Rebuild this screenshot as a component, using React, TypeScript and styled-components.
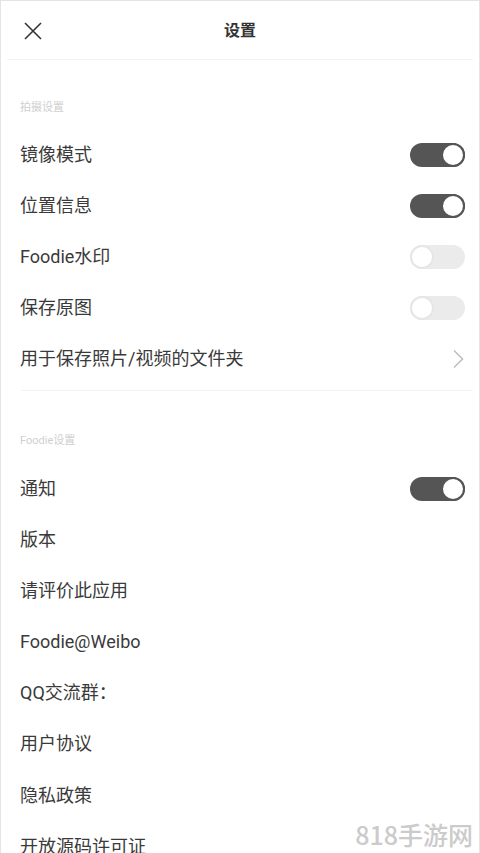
import React from "react";
import styled, { createGlobalStyle } from "styled-components";

const Global = createGlobalStyle`
  html, body { margin: 0; padding: 0; background: #fff; }
  body { font-family: Roboto, "Noto Sans CJK SC", sans-serif; color: #333; overflow: hidden; }
`;

const Frame = styled.div`
  position: relative;
  width: 480px;
  height: 853px;
  box-sizing: border-box;
  border: 1px solid #e4e4e4;
  border-bottom: none;
  overflow: hidden;
  background: #fff;
`;

const Header = styled.header`
  height: 58px;
  margin: 0 6px;
  border-bottom: 1px solid #f3f3f3;
  display: flex;
  align-items: center;
  justify-content: center;
  position: relative;
`;

const CloseButton = styled.button`
  position: absolute;
  left: 16px;
  top: 20px;
  width: 20px;
  height: 20px;
  padding: 0;
  border: none;
  background: none;
  display: flex;
`;

const Title = styled.h1`
  margin: 0;
  font-size: 16px;
  font-weight: 700;
  color: #333;
  line-height: 20px;
  padding-top: 1px;
`;

const SectionLabel = styled.div<{ $top: number; $bottom: number }>`
  padding: ${(p) => p.$top}px 19px ${(p) => p.$bottom}px;
  font-size: 11px;
  line-height: 14px;
  color: #cfcfcf;
`;

const Row = styled.div`
  height: 51.2px;
  padding: 0 14px 0 19px;
  display: flex;
  align-items: center;
  justify-content: space-between;
`;

const Label = styled.span`
  font-size: 18px;
  font-weight: 400;
  color: #3a3a3a;
  line-height: 24px;
`;

const Track = styled.div<{ $on: boolean }>`
  width: 55px;
  height: 24px;
  border-radius: 12px;
  box-sizing: border-box;
  background: ${(p) => (p.$on ? "#555" : "#ebebeb")};
  display: flex;
  justify-content: ${(p) => (p.$on ? "flex-end" : "flex-start")};
  align-items: center;
`;

const Knob = styled.div<{ $on: boolean }>`
  width: 24px;
  height: 24px;
  border-radius: 50%;
  box-sizing: border-box;
  background: #fff;
  border: 2px solid ${(p) => (p.$on ? "#555" : "#e6e6e6")};
`;

const Divider = styled.div`
  height: 1px;
  margin: 5px 7px 0 20px;
  background: #f3f3f3;
`;

const Watermark = styled.div`
  position: absolute;
  right: 6px;
  bottom: 2px;
  font-family: "Noto Sans CJK SC", sans-serif;
  font-size: 25px;
  font-weight: 500;
  color: #cbcbcb;
  line-height: 34px;
`;

const Toggle = ({ on }: { on: boolean }) => (
  <Track $on={on}>
    <Knob $on={on} />
  </Track>
);

const Chevron = () => (
  <svg width="14" height="20" viewBox="0 0 14 20">
    <path d="M3 1.5 L11.5 10 L3 18.5" fill="none" stroke="#bdbdbd" strokeWidth="1.5" />
  </svg>
);

type Item = { label: string; toggle?: boolean; chevron?: boolean };

const shoot: Item[] = [
  { label: "镜像模式", toggle: true },
  { label: "位置信息", toggle: true },
  { label: "Foodie水印", toggle: false },
  { label: "保存原图", toggle: false },
  { label: "用于保存照片/视频的文件夹", chevron: true },
];

const foodie: Item[] = [
  { label: "通知", toggle: true },
  { label: "版本" },
  { label: "请评价此应用" },
  { label: "Foodie@Weibo" },
  { label: "QQ交流群：" },
  { label: "用户协议" },
  { label: "隐私政策" },
  { label: "开放源码许可证" },
];

const renderRow = (it: Item) => (
  <Row key={it.label}>
    <Label>{it.label}</Label>
    {it.toggle !== undefined && <Toggle on={it.toggle} />}
    {it.chevron && <Chevron />}
  </Row>
);

export default function App() {
  return (
    <>
      <Global />
      <Frame>
        <Header>
          <CloseButton aria-label="close">
            <svg width="20" height="20" viewBox="0 0 20 20">
              <path d="M2 2 L18 18 M18 2 L2 18" stroke="#333" strokeWidth="1.6" fill="none" />
            </svg>
          </CloseButton>
          <Title>设置</Title>
        </Header>
        <SectionLabel $top={41} $bottom={14}>拍摄设置</SectionLabel>
        {shoot.map(renderRow)}
        <Divider />
        <SectionLabel $top={43} $bottom={15}>Foodie设置</SectionLabel>
        {foodie.map(renderRow)}
        <Watermark>818手游网</Watermark>
      </Frame>
    </>
  );
}
